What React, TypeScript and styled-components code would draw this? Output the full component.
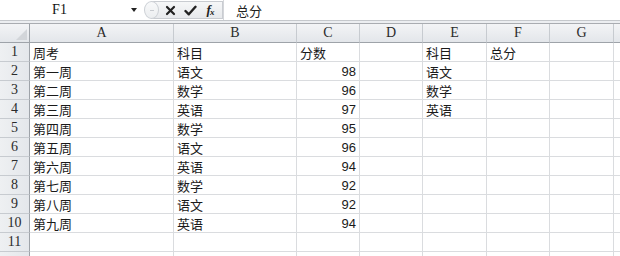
import React from "react";
import styled, { createGlobalStyle } from "styled-components";

const Global = createGlobalStyle`
  html, body { margin: 0; padding: 0; background: #ffffff; overflow: hidden; }
  body { font-family: "Noto Sans CJK SC", "Liberation Serif", serif; }
  * { box-sizing: border-box; }
`;

const Page = styled.div`
  width: 620px;
  height: 256px;
  overflow: hidden;
  display: flex;
  flex-direction: column;
  background: #fff;
`;

const FormulaBar = styled.div`
  height: 21px;
  flex: none;
  display: flex;
  align-items: stretch;
  border-bottom: 1px solid #c5c8cc;
  background: #fff;
`;

const NameBox = styled.div`
  width: 145px;
  display: flex;
  align-items: center;
  font-family: "Liberation Serif", serif;
  font-size: 14px;
  color: #111;
`;

const NameText = styled.span`
  flex: 1;
  text-align: center;
  padding-right: 12px;
`;

const DropArrow = styled.span`
  width: 0;
  height: 0;
  border-left: 3.5px solid transparent;
  border-right: 3.5px solid transparent;
  border-top: 4px solid #222;
  margin-right: 8px;
`;

const Pill = styled.div`
  width: 78px;
  margin: 1px 0;
  display: flex;
  align-items: center;
  border: 1px solid #c9ccd1;
  border-left: none;
  border-radius: 10px 0 0 10px;
  background: linear-gradient(#f6f7f8, #e7e9ec);
`;

const PillKnob = styled.span`
  width: 15px;
  height: 18px;
  margin-left: -1px;
  border-radius: 50%;
  border: 1px solid #ccd0d5;
  background: linear-gradient(#f8f9fa, #eceef0);
  display: flex;
  align-items: center;
  justify-content: center;
  &::after {
    content: "";
    width: 4px;
    height: 1px;
    background: #c8cbd0;
  }
`;

const IconSlot = styled.span<{ $w: number }>`
  width: ${(p) => p.$w}px;
  display: flex;
  align-items: center;
  justify-content: center;
`;

const Fx = styled.span`
  font-family: "Liberation Serif", serif;
  font-style: italic;
  font-weight: bold;
  font-size: 13px;
  color: #222;
  letter-spacing: -1px;
  & sub {
    font-size: 9px;
    vertical-align: -1px;
  }
`;

const FormulaInput = styled.div`
  flex: 1;
  display: flex;
  align-items: center;
  padding-left: 12px;
  border-left: 1px solid #d4d6da;
  font-size: 13px;
  color: #222;
`;

const Strip = styled.div`
  height: 2px;
  flex: none;
  background: #eceef1;
`;

const Sheet = styled.div`
  display: grid;
  grid-template-columns: 30px 144px 123px 63px 63px 64px 63px 64px 1fr;
  grid-auto-rows: 19px;
  border-top: 1px solid #a9acb1;
`;

const ColHead = styled.div`
  height: 19px;
  display: flex;
  align-items: center;
  justify-content: center;
  background: linear-gradient(#f3f4f6, #e3e6ea);
  border-right: 1px solid #c7cbd0;
  border-bottom: 1px solid #9ea3a9;
  font-family: "Liberation Serif", serif;
  font-size: 14px;
  color: #2b2b2b;
`;

const Corner = styled(ColHead)`
  position: relative;
  border-right: 1px solid #9ea3a9;
  &::after {
    content: "";
    position: absolute;
    right: 2px;
    bottom: 2px;
    width: 0;
    height: 0;
    border-left: 11px solid transparent;
    border-bottom: 11px solid #d2d5d9;
  }
`;

const RowHead = styled.div`
  display: flex;
  align-items: center;
  justify-content: center;
  background: linear-gradient(90deg, #eef0f2, #e4e7eb);
  border-right: 1px solid #9ea3a9;
  border-bottom: 1px solid #c7cbd0;
  font-family: "Liberation Serif", serif;
  font-size: 14px;
  color: #2b2b2b;
`;

const Cell = styled.div<{ $num?: boolean }>`
  display: flex;
  align-items: center;
  justify-content: ${(p) => (p.$num ? "flex-end" : "flex-start")};
  padding: 0 3px;
  border-right: 1px solid #dadcdf;
  border-bottom: 1px solid #dadcdf;
  font-family: ${(p) =>
    p.$num ? '"Liberation Sans", Arial, sans-serif' : '"Noto Sans CJK SC", sans-serif'};
  font-size: 13px;
  color: #1a1a1a;
  white-space: nowrap;
  overflow: hidden;
`;

const cols = ["A", "B", "C", "D", "E", "F", "G"];

type Row = (string | number)[];
const rows: Row[] = [
  ["周考", "科目", "分数", "", "科目", "总分", ""],
  ["第一周", "语文", 98, "", "语文", "", ""],
  ["第二周", "数学", 96, "", "数学", "", ""],
  ["第三周", "英语", 97, "", "英语", "", ""],
  ["第四周", "数学", 95, "", "", "", ""],
  ["第五周", "语文", 96, "", "", "", ""],
  ["第六周", "英语", 94, "", "", "", ""],
  ["第七周", "数学", 92, "", "", "", ""],
  ["第八周", "语文", 92, "", "", "", ""],
  ["第九周", "英语", 94, "", "", "", ""],
  ["", "", "", "", "", "", ""],
];

const XIcon = () => (
  <svg width="11" height="11" viewBox="0 0 11 11">
    <path d="M2 2 L9 9 M9 2 L2 9" stroke="#222" strokeWidth="2.2" strokeLinecap="round" />
  </svg>
);

const CheckIcon = () => (
  <svg width="13" height="11" viewBox="0 0 13 11">
    <path d="M1.5 6 L4.8 9.3 L11.5 1.8" stroke="#222" strokeWidth="2.4" fill="none" strokeLinecap="round" strokeLinejoin="round" />
  </svg>
);

export default function App() {
  return (
    <Page>
      <Global />
      <FormulaBar>
        <NameBox>
          <NameText>F1</NameText>
          <DropArrow />
        </NameBox>
        <Pill>
          <PillKnob />
          <IconSlot $w={22}>
            <XIcon />
          </IconSlot>
          <IconSlot $w={18}>
            <CheckIcon />
          </IconSlot>
          <IconSlot $w={22}>
            <Fx>
              f<sub>x</sub>
            </Fx>
          </IconSlot>
        </Pill>
        <FormulaInput>总分</FormulaInput>
      </FormulaBar>
      <Strip />
      <Sheet>
        <Corner />
        {cols.map((c) => (
          <ColHead key={c}>{c}</ColHead>
        ))}
        <ColHead />
        {rows.map((r, i) => (
          <React.Fragment key={i}>
            <RowHead>{i + 1}</RowHead>
            {r.map((v, j) => (
              <Cell key={j} $num={typeof v === "number"}>
                {v}
              </Cell>
            ))}
            <Cell />
          </React.Fragment>
        ))}
        <RowHead />
        {cols.map((c) => (
          <Cell key={`tail-${c}`} />
        ))}
        <Cell />
      </Sheet>
    </Page>
  );
}
